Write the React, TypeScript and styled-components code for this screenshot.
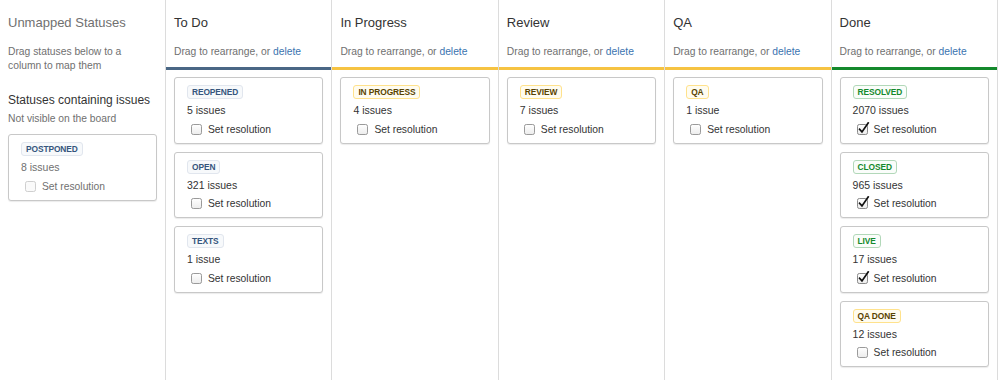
import React from "react";
import styled, { createGlobalStyle } from "styled-components";

const GlobalStyle = createGlobalStyle`
  html, body { margin: 0; padding: 0; background: #fff; }
  body { font-family: "Liberation Sans", Arial, sans-serif; color: #333; }
`;

type Tone = "blue" | "yellow" | "green";

const toneStyles: Record<Tone, { color: string; border: string; bg: string; bar: string }> = {
  blue: { color: "#35557d", border: "#e1e6ee", bg: "#f7f9fb", bar: "#4a6785" },
  yellow: { color: "#594300", border: "#ffe28c", bg: "#fffcf0", bar: "#f6c342" },
  green: { color: "#14892c", border: "#b2d8b9", bg: "#fafdfa", bar: "#14892c" },
};

const Board = styled.div`
  display: grid;
  grid-template-columns: 166px repeat(5, 1fr);
  width: 998px;
  min-height: 380px;
`;

const Column = styled.section`
  display: flex;
  flex-direction: column;
  border-right: 1px solid #dcdcdc;
  min-width: 0;
`;

const Header = styled.div`
  padding: 0 8px;
`;

const Title = styled.h3<{ $muted?: boolean }>`
  margin: 15px 0 0;
  font-size: 13px;
  line-height: 16px;
  font-weight: normal;
  color: ${(p) => (p.$muted ? "#707070" : "#333")};
  white-space: nowrap;
`;

const Desc = styled.p`
  margin: 14px 0 0;
  font-size: 10.3px;
  line-height: 14px;
  color: #707070;
  white-space: nowrap;
`;

const Link = styled.a`
  color: #3b73af;
  text-decoration: none;
`;

const Bar = styled.div<{ $color: string }>`
  height: 3px;
  margin-top: 8px;
  background: ${(p) => p.$color};
`;

const SubTitle = styled.h4`
  margin: 20px 0 0;
  font-size: 12px;
  line-height: 15px;
  font-weight: normal;
  color: #333;
  white-space: nowrap;
`;

const SubDesc = styled.p`
  margin: 4px 0 0;
  font-size: 10.3px;
  line-height: 13px;
  color: #707070;
  white-space: nowrap;
`;

const CardList = styled.div<{ $top?: number }>`
  display: flex;
  flex-direction: column;
  gap: 8px;
  padding: ${(p) => p.$top ?? 7}px 8px 8px;
`;

const Card = styled.div`
  border: 1px solid #c8c8c8;
  border-radius: 3px;
  background: #fff;
  box-shadow: 0 1px 1px rgba(0, 0, 0, 0.08);
  padding: 7px 12px 5.5px;
  display: flex;
  flex-direction: column;
  align-items: flex-start;
`;

const Lozenge = styled.span<{ $tone: Tone }>`
  display: inline-block;
  font-size: 8.4px;
  font-weight: bold;
  letter-spacing: -0.1px;
  line-height: 12px;
  padding: 0 4px;
  border-radius: 3px;
  text-transform: uppercase;
  white-space: nowrap;
  color: ${(p) => toneStyles[p.$tone].color};
  border: 1px solid ${(p) => toneStyles[p.$tone].border};
  background: ${(p) => toneStyles[p.$tone].bg};
`;

const Count = styled.div<{ $muted?: boolean }>`
  margin-top: 4px;
  font-size: 10.5px;
  line-height: 14px;
  color: ${(p) => (p.$muted ? "#707070" : "#333")};
`;

const ResolutionRow = styled.label<{ $muted?: boolean }>`
  display: flex;
  align-items: center;
  margin-top: 4px;
  padding-left: 4px;
  height: 16px;
  font-size: 10.3px;
  color: ${(p) => (p.$muted ? "#707070" : "#333")};
  white-space: nowrap;
`;

const BoxWrap = styled.span`
  display: inline-flex;
  width: 11px;
  height: 11px;
  margin-right: 6px;
  position: relative;
`;

const Check: React.FC<{ checked?: boolean; disabled?: boolean }> = ({ checked, disabled }) => (
  <BoxWrap>
    <svg width="15" height="15" viewBox="0 0 15 15" style={{ position: "absolute", left: 0, top: -2 }}>
      <defs>
        <linearGradient id="cbg" x1="0" y1="0" x2="0" y2="1">
          <stop offset="0" stopColor="#ffffff" />
          <stop offset="1" stopColor="#ececec" />
        </linearGradient>
      </defs>
      <rect
        x="0.5"
        y="2.5"
        width="10"
        height="10"
        rx="1.8"
        fill={disabled ? "#fafafa" : "url(#cbg)"}
        stroke={disabled ? "#cfcfcf" : checked ? "#8a8a8a" : "#9a9a9a"}
      />
      {checked && (
        <path d="M2.6 7.2 L5 9.9 L11.2 0.9" fill="none" stroke="#111" strokeWidth="1.7" strokeLinecap="square" />
      )}
    </svg>
  </BoxWrap>
);

type Status = { name: string; tone: Tone; count: string; checked?: boolean };

const StatusCard: React.FC<{ s: Status; muted?: boolean }> = ({ s, muted }) => (
  <Card>
    <Lozenge $tone={s.tone}>{s.name}</Lozenge>
    <Count $muted={muted}>{s.count}</Count>
    <ResolutionRow $muted={muted}>
      <Check checked={s.checked} disabled={muted} />
      Set resolution
    </ResolutionRow>
  </Card>
);

const columns: { title: string; tone: Tone; statuses: Status[] }[] = [
  {
    title: "To Do",
    tone: "blue",
    statuses: [
      { name: "Reopened", tone: "blue", count: "5 issues" },
      { name: "Open", tone: "blue", count: "321 issues" },
      { name: "Texts", tone: "blue", count: "1 issue" },
    ],
  },
  {
    title: "In Progress",
    tone: "yellow",
    statuses: [{ name: "In Progress", tone: "yellow", count: "4 issues" }],
  },
  {
    title: "Review",
    tone: "yellow",
    statuses: [{ name: "Review", tone: "yellow", count: "7 issues" }],
  },
  {
    title: "QA",
    tone: "yellow",
    statuses: [{ name: "QA", tone: "yellow", count: "1 issue" }],
  },
  {
    title: "Done",
    tone: "green",
    statuses: [
      { name: "Resolved", tone: "green", count: "2070 issues", checked: true },
      { name: "Closed", tone: "green", count: "965 issues", checked: true },
      { name: "Live", tone: "green", count: "17 issues", checked: true },
      { name: "QA Done", tone: "yellow", count: "12 issues" },
    ],
  },
];

export default function App() {
  return (
    <>
      <GlobalStyle />
      <Board>
        <Column>
          <Header>
            <Title $muted>Unmapped Statuses</Title>
            <Desc>
              Drag statuses below to a
              <br />
              column to map them
            </Desc>
            <SubTitle>Statuses containing issues</SubTitle>
            <SubDesc>Not visible on the board</SubDesc>
          </Header>
          <CardList $top={9}>
            <StatusCard s={{ name: "Postponed", tone: "blue", count: "8 issues" }} muted />
          </CardList>
        </Column>
        {columns.map((c) => (
          <Column key={c.title}>
            <Header>
              <Title>{c.title}</Title>
              <Desc>
                Drag to rearrange, or <Link href="#">delete</Link>
              </Desc>
            </Header>
            <Bar $color={toneStyles[c.tone].bar} />
            <CardList>
              {c.statuses.map((s) => (
                <StatusCard key={s.name} s={s} />
              ))}
            </CardList>
          </Column>
        ))}
      </Board>
    </>
  );
}
